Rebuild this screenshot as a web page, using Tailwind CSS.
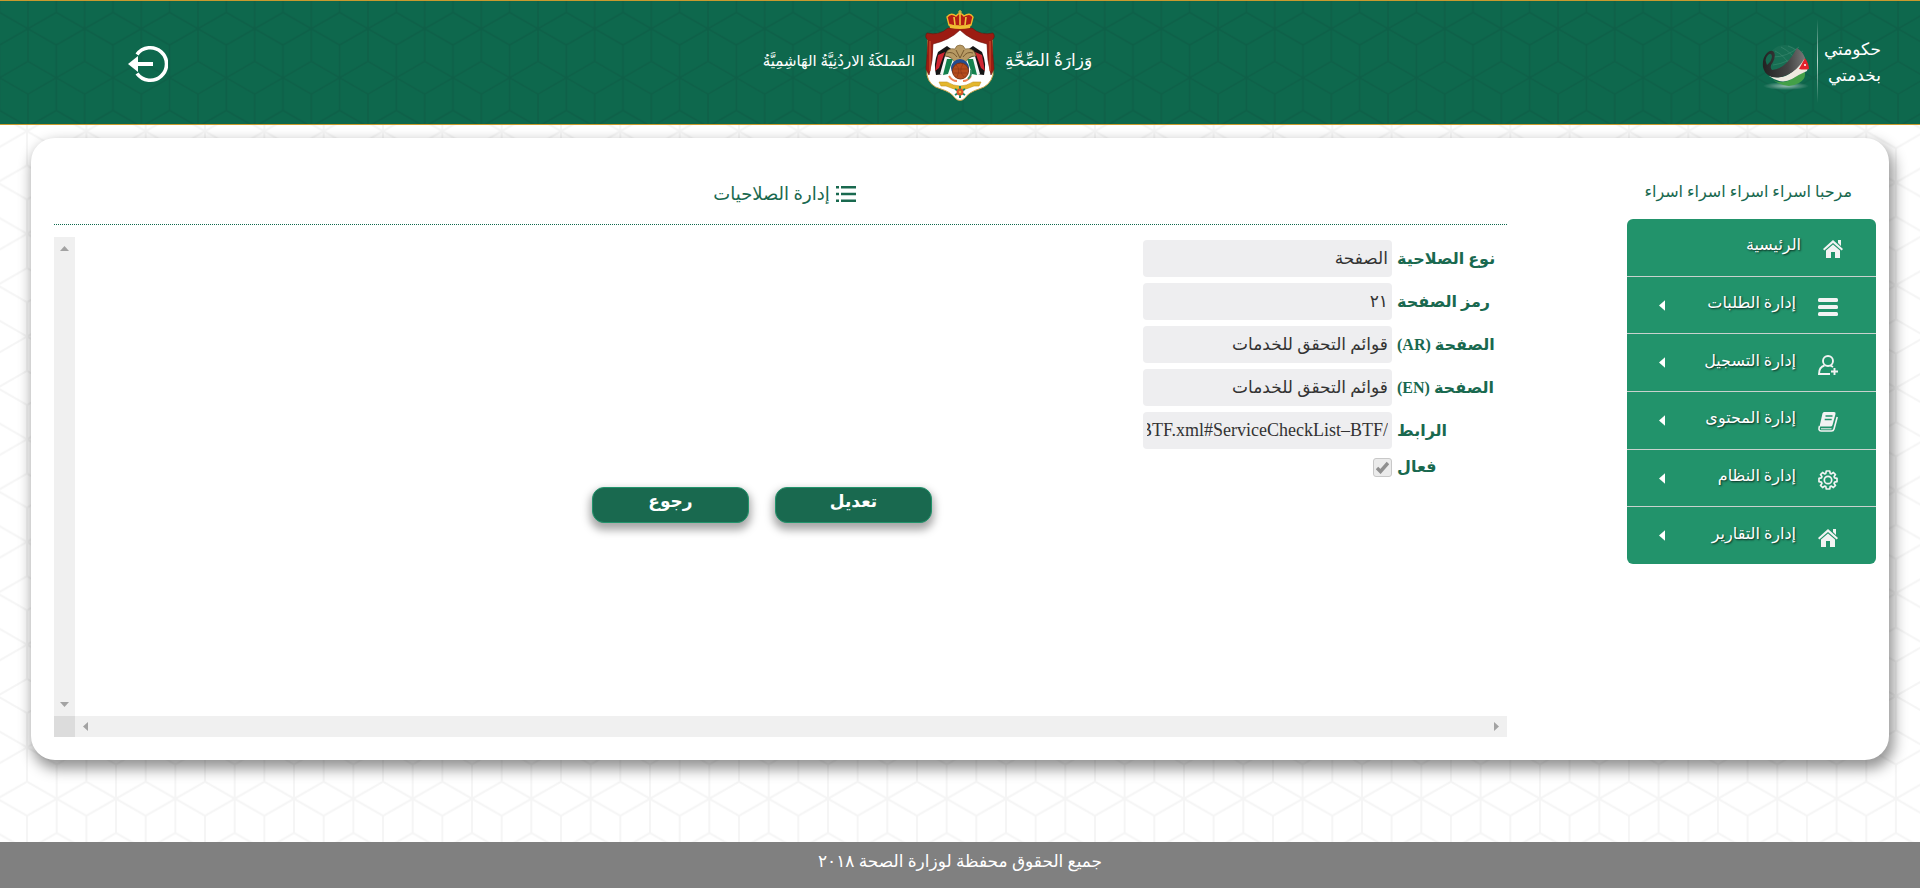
<!DOCTYPE html>
<html lang="ar" dir="rtl">
<head>
<meta charset="utf-8">
<meta name="viewport" content="width=device-width, initial-scale=1">
<title>إدارة الصلاحيات</title>
<script src="https://cdn.jsdelivr.net/npm/@tailwindcss/browser@4"></script>
</head>
<body class="relative isolate flex min-h-screen flex-col bg-white font-['Liberation_Serif','DejaVu_Sans',serif] text-[#19694f]">

<!-- Page background pattern -->
<svg class="absolute inset-0 -z-10 h-full w-full" aria-hidden="true">
  <defs>
    <pattern id="cubes" width="59.33" height="102.7" patternUnits="userSpaceOnUse" patternTransform="translate(56.7 798.7)">
      <path d="M0 0V34.2M59.33 0V34.2M0 68.5V102.7M59.33 68.5V102.7M29.67 17.1V85.6M0 0L29.67 17.1L59.33 0M0 34.2L59.33 68.5M59.33 34.2L0 68.5M0 102.7L29.67 85.6L59.33 102.7" fill="none" stroke="#f5f5f5" stroke-width="2"/>
    </pattern>
    <pattern id="cubes-dark" width="56.67" height="98" patternUnits="userSpaceOnUse" patternTransform="translate(141.3 27.7)">
      <path d="M0 0V32.7M56.67 0V32.7M0 65.3V98M56.67 65.3V98M28.33 16.3V81.7M0 0L28.33 16.3L56.67 0M0 32.7L56.67 65.3M56.67 32.7L0 65.3M0 98L28.33 81.7L56.67 98" fill="none" stroke="#0e6048" stroke-width="1.6"/>
    </pattern>
  </defs>
  <rect width="100%" height="100%" fill="url(#cubes)"/>
</svg>

<header class="relative isolate grid h-[125px] grid-cols-[1fr_auto_1fr] items-start gap-2.5 border-y border-[#c99a2e] bg-[#0e684d] text-white">
  <svg class="absolute inset-0 -z-10 h-full w-full" aria-hidden="true"><rect width="100%" height="100%" fill="url(#cubes-dark)"/></svg>

  <div class="flex items-start justify-between pr-[39px]">
    <div class="flex items-center gap-1.5 pt-[18px]">
      <p class="pt-1 text-[17px] leading-[26px]">حكومتي<br>بخدمتي</p>
      <span class="h-[84px] w-px bg-gradient-to-b from-transparent via-white/70 to-transparent"></span>
      <svg class="mt-3 h-12 w-[50px]" viewBox="0 0 50 48" aria-hidden="true">
        <defs>
          <radialGradient id="glow"><stop offset="0" stop-color="#fff" stop-opacity=".55"/><stop offset="1" stop-color="#fff" stop-opacity="0"/></radialGradient>
          <linearGradient id="band" x1="0" x2="1"><stop offset="0" stop-color="#222"/><stop offset=".6" stop-color="#444"/><stop offset="1" stop-color="#777"/></linearGradient>
        </defs>
        <ellipse cx="25" cy="43" rx="23" ry="4" fill="url(#glow)"/>
        <circle cx="24" cy="20" r="18" fill="#176e53"/>
        <path d="M14 8Q24 12 34 30M20 4Q32 10 40 24M27 3Q36 6 42 14M12 14Q26 14 38 4M12 22Q28 20 42 8M14 30Q32 26 44 14" fill="none" stroke="#3d8a70" stroke-width=".6"/>
        <path d="M12 37Q22 42 31 36Q40 30 44 29Q45 36 38 40Q26 47 12 37Z" fill="#43a047"/>
        <path d="M8 33Q22 37 31 29Q38 23 43 15Q48 22 46 28Q39 31 31 36Q20 42 8 33Z" fill="#eeeae0"/>
        <path d="M38 26L44 15Q48 21 48 26Q43 27 38 26Z" fill="#e3202c"/>
        <circle cx="44" cy="22" r="1" fill="#fff"/>
        <path d="M2 24Q1 15 6 10Q10 6 13 9Q15 13 12 19Q8 24 11 27Q24 27 36 5Q42 9 44 15Q36 28 26 32Q14 37 7 32Q3 29 2 24Z" fill="url(#band)"/>
        <path d="M6 22Q3 16 7 12Q10 9 11 13Q11 18 6 22Z" fill="#14694f"/>
      </svg>
    </div>
    <p class="pt-11 text-[17px] leading-8">وَزارَةُ الصِّحَّةِ</p>
  </div>

  <svg class="mt-2 h-[93px] w-[70px]" viewBox="0 0 70 93" role="img" aria-label="شعار المملكة">
    <path d="M3 27Q22 24 35 20Q48 24 67 27L68 66Q65 77 54 80Q44 83 40 89Q35 94 30 89Q26 83 16 80Q4 77 2 66Z" fill="#fff" stroke="#cfa64a"/>
    <path d="M23 19Q14 27 2 24Q-1 28 3 31Q2 48 1 60L4 66Q8 52 8 35Q25 31 35 21Q45 31 62 35Q62 52 66 66L69 60Q68 48 67 31Q71 28 68 24Q56 27 47 19Z" fill="#9c1c12" stroke="#6d130c" stroke-width=".6"/>
    <path d="M5 32V62M65 32V62" stroke="#dc5a33" stroke-width="1"/>
    <path d="M24 16L22 8Q26 3 31 7Q35 2 39 7Q45 3 48 8L46 16Q35 19 24 16Z" fill="#b51d14" stroke="#f1b72b" stroke-width="1.4"/>
    <path d="M30 16L29 8M35 16V5M40 16L41 8" stroke="#f1c33b" stroke-width="1.6"/>
    <path d="M24 15Q35 18 46 15L45 19Q35 21 25 19Z" fill="#f0bd32"/>
    <path d="M35 1V5M33 3H37" stroke="#f1c33b" stroke-width="1.2"/>
    <path d="M22 37L13 43Q8 55 11 66L20 65Q26 51 29 42Z" fill="#151515"/>
    <path d="M48 37L57 43Q62 55 59 66L50 65Q44 51 41 42Z" fill="#151515"/>
    <path d="M20 47L15 65L19 67L26 49ZM50 47L55 65L51 67L44 49Z" fill="#f7f7f7"/>
    <path d="M22 50L18 66L23 65L28 50ZM48 50L52 66L47 65L42 50Z" fill="#14814d"/>
    <path d="M13 46L10 62L14 59L20 43ZM57 46L60 62L56 59L50 43Z" fill="#cf2430"/>
    <path d="M20 47Q22 38 30 40Q31 36 35 36Q39 36 40 40Q49 38 51 47Q44 46 40 54Q35 57 30 54Q27 47 20 47Z" fill="#b89a64" stroke="#7f6436" stroke-width=".7"/>
    <path d="M22 44Q28 42 32 48M48 44Q42 42 38 48M31 41L35 49L39 41" fill="none" stroke="#76592f"/>
    <circle cx="35" cy="59" r="9" fill="#244c91"/>
    <circle cx="35.500" cy="62" r="8" fill="#b54c1d" stroke="#7d3213"/>
    <path d="M29 60H42M31 56Q36 60 32 68M38 55Q33 62 39 68M29 64H42" fill="none" stroke="#8d3717" stroke-width=".7"/>
    <path d="M24 67Q27 72 32 72M46 67Q43 72 38 72" fill="none" stroke="#ef8254" stroke-width="2"/>
    <path d="M43 70Q47 66 46 61" fill="none" stroke="#348c64" stroke-width="2"/>
    <path d="M14 73H22Q35 81 48 73H56L54 77H49Q35 84 21 77H16Z" fill="#e4b72c" stroke="#c1921e" stroke-width=".6"/>
    <g fill="none" stroke="#168b68" stroke-width="2"><path d="M35 77V89M30 80L40 86M40 80L30 86"/></g>
    <circle cx="35" cy="83" r="3.500" fill="#d5542b"/><circle cx="35" cy="83" r="1.300" fill="#f0b52d"/>
  </svg>

  <div class="flex items-start justify-between pl-32">
    <p class="pt-11 text-[15px] leading-8">المَملكَةُ الاردُنِيَّةُ الهَاشِمِيَّةُ</p>
    <a href="#" aria-label="تسجيل الخروج" class="pt-11">
      <svg class="h-[38px] w-10" viewBox="0 0 40 38" aria-hidden="true">
        <path d="M9 9.500A16.300 16.300 0 1 1 9 28.500" fill="none" stroke="#fff" stroke-width="3.600"/>
        <path d="M0 19L10 11V17H25V21H10V27Z" fill="#fff"/>
      </svg>
    </a>
  </div>
</header>

<div class="mx-[31px] mt-[13px] mb-[82px] flex min-h-[622px] flex-1 rounded-3xl bg-white pr-[13px] pl-[23px] shadow-[3px_7px_14px_2px_rgba(0,0,0,0.42)]">

  <aside class="w-[249px] shrink-0 pt-10">
    <p class="pr-6 text-base leading-7 whitespace-nowrap">مرحبا اسراء اسراء اسراء اسراء</p>
    <nav class="mt-[13px] flex h-[345px] flex-col divide-y divide-[#c9d2ce] overflow-hidden rounded-md bg-[#22936b] text-base text-white [text-shadow:1px_1px_2px_rgba(0,0,0,0.7)]">
      <a href="#" class="flex flex-1 items-center gap-[22px] pr-[33px]">
        <svg class="mt-1 size-5" viewBox="0 0 20 20" fill="#f3f3f3" aria-hidden="true"><path d="M10 1L20 10L18.700 11.500L10 4L1.300 11.500L0 10ZM15 1H18V7L15 4ZM10 5.500L17 11.500V19H12V13H8V19H3V11.500Z"/></svg>
        <span class="mb-1">الرئيسية</span>
      </a>
      <a href="#" class="flex flex-1 items-center gap-[22px] pr-[38px] pl-8">
        <svg class="mt-1 size-5" viewBox="0 0 20 20" fill="#f3f3f3" aria-hidden="true"><rect y="1" width="20" height="4" rx="1.500"/><rect y="8" width="20" height="4" rx="1.500"/><rect y="15" width="20" height="4" rx="1.500"/></svg>
        <span class="mb-1 flex-1">إدارة الطلبات</span>
        <svg class="h-[11px] w-1.5" viewBox="0 0 7 12" fill="#fff" aria-hidden="true"><path d="M7 0V12L0 6Z"/></svg>
      </a>
      <a href="#" class="flex flex-1 items-center gap-[22px] pr-[38px] pl-8">
        <svg class="mt-1 size-5" viewBox="0 0 20 20" fill="none" stroke="#f3f3f3" stroke-width="1.900" aria-hidden="true"><circle cx="10" cy="6" r="5"/><path d="M6.500 10.500Q1 12 1 19H12M16.500 13V20M13 16.500H20M12.500 10.500L15 12"/></svg>
        <span class="mb-1 flex-1">إدارة التسجيل</span>
        <svg class="h-[11px] w-1.5" viewBox="0 0 7 12" fill="#fff" aria-hidden="true"><path d="M7 0V12L0 6Z"/></svg>
      </a>
      <a href="#" class="flex flex-1 items-center gap-[22px] pr-[38px] pl-8">
        <svg class="mt-1 size-5" viewBox="0 0 20 20" aria-hidden="true"><path d="M6 0H16Q18 0 17.500 2L14.500 13Q14 14.500 12.500 14.500H1.500L4.500 1.500Q5 0 6 0Z" fill="#f3f3f3"/><path d="M1.500 14Q0 19 3 19H13.500Q15.500 19 16 17L19.200 5" fill="none" stroke="#f3f3f3" stroke-width="1.600"/><path d="M3 16.800H13.500" stroke="#f3f3f3" stroke-width="1"/><path d="M7.500 4H14.500M6.700 7.500H13.700" stroke="#22936b" stroke-width="1.400"/></svg>
        <span class="mb-1 flex-1">إدارة المحتوى</span>
        <svg class="h-[11px] w-1.5" viewBox="0 0 7 12" fill="#fff" aria-hidden="true"><path d="M7 0V12L0 6Z"/></svg>
      </a>
      <a href="#" class="flex flex-1 items-center gap-[22px] pr-[38px] pl-8">
        <svg class="mt-1 size-5" viewBox="0 0 20 20" fill="none" stroke="#f3f3f3" stroke-width="1.700" stroke-linejoin="round" aria-hidden="true"><path d="M8.300 1H11.700L12.200 3.400L13.400 3.900L15.400 2.500L17.500 4.600L16.100 6.600L16.600 7.800L19 8.300V11.700L16.600 12.200L16.100 13.400L17.500 15.400L15.400 17.500L13.400 16.100L12.200 16.600L11.700 19H8.300L7.800 16.600L6.600 16.100L4.600 17.500L2.500 15.400L3.900 13.400L3.400 12.200L1 11.700V8.300L3.400 7.800L3.900 6.600L2.500 4.600L4.600 2.500L6.600 3.900L7.800 3.400Z"/><circle cx="10" cy="10" r="3.700"/></svg>
        <span class="mb-1 flex-1">إدارة النظام</span>
        <svg class="h-[11px] w-1.5" viewBox="0 0 7 12" fill="#fff" aria-hidden="true"><path d="M7 0V12L0 6Z"/></svg>
      </a>
      <a href="#" class="flex flex-1 items-center gap-[22px] pr-[38px] pl-8">
        <svg class="mt-1 size-5" viewBox="0 0 20 20" fill="#f3f3f3" aria-hidden="true"><path d="M10 1L20 10L18.700 11.500L10 4L1.300 11.500L0 10ZM15 1H18V7L15 4ZM10 5.500L17 11.500V19H12V13H8V19H3V11.500Z"/></svg>
        <span class="mb-1 flex-1">إدارة التقارير</span>
        <svg class="h-[11px] w-1.5" viewBox="0 0 7 12" fill="#fff" aria-hidden="true"><path d="M7 0V12L0 6Z"/></svg>
      </a>
    </nav>
  </aside>

  <main class="mr-[120px] flex min-w-0 flex-1 flex-col pt-10 pb-[23px]">
    <h1 class="flex h-[47px] items-start justify-center gap-1.5 border-b border-dotted border-[#0e684d] pl-2 text-lg leading-8 font-normal">
      <svg class="mt-2 h-4 w-5" viewBox="0 0 20 16" fill="#19694f" aria-hidden="true"><path d="M0 0H15V2.500H0ZM0 6.700H15V9.200H0ZM0 13.400H15V16H0ZM17 0H20V2.500H17ZM17 6.700H20V9.200H17ZM17 13.400H20V16H17Z" transform="matrix(-1 0 0 1 20 0)"/></svg>
      إدارة الصلاحيات
    </h1>

    <div class="mt-3 flex flex-1">
      <form class="flex-1 pt-[3px]">
        <div class="grid grid-cols-[110px_249px] items-center gap-x-[5px] gap-y-1.5 text-base font-bold">
          <label for="kind" class="text-left whitespace-nowrap">نوع الصلاحية</label>
          <input id="kind" disabled value="الصفحة" class="h-[37px] rounded bg-[#eeeef0] px-1 text-[17px] font-normal text-[#333]">
          <label for="code" class="text-left whitespace-nowrap">رمز الصفحة</label>
          <input id="code" disabled value="٢١" class="h-[37px] rounded bg-[#eeeef0] px-1 text-[17px] font-normal text-[#333]">
          <label for="page-ar" class="text-left whitespace-nowrap">الصفحة (AR)</label>
          <input id="page-ar" disabled value="قوائم التحقق للخدمات" class="h-[37px] rounded bg-[#eeeef0] px-1 text-[17px] font-normal text-[#333]">
          <label for="page-en" class="text-left whitespace-nowrap">الصفحة (EN)</label>
          <input id="page-en" disabled value="قوائم التحقق للخدمات" class="h-[37px] rounded bg-[#eeeef0] px-1 text-[17px] font-normal text-[#333]">
          <label for="link" class="text-left whitespace-nowrap">الرابط</label>
          <input id="link" disabled value="/BTF.xml#ServiceCheckList–BTF" class="h-[37px] rounded bg-[#eeeef0] px-1 text-lg font-normal text-[#333]">
          <label for="active" class="text-left whitespace-nowrap">فعال</label>
          <span class="relative flex h-6 items-center">
            <input id="active" type="checkbox" checked disabled class="size-[19px] appearance-none rounded-[3px] border border-[#c8c8c8] bg-[#ebebeb]">
            <svg class="pointer-events-none absolute right-[3px] size-[13px]" viewBox="0 0 13 13" fill="none" stroke="#8f8f8f" stroke-width="3.500" aria-hidden="true"><path d="M1 7L4.500 10.500L12 2"/></svg>
          </span>
        </div>
        <div class="mt-2 flex justify-center gap-[26px] pr-[58px] text-[17px] font-bold text-white">
          <button type="button" class="h-9 w-[157px] rounded-xl border border-[#22936b] bg-[#19694f] pb-1.5 leading-6 shadow-[0_5px_9px_2px_rgba(0,0,0,0.35)]">تعديل</button>
          <button type="button" class="h-9 w-[157px] rounded-xl border border-[#22936b] bg-[#19694f] pb-1.5 leading-6 shadow-[0_5px_9px_2px_rgba(0,0,0,0.35)]">رجوع</button>
        </div>
      </form>
      <div class="flex w-[21px] flex-col items-center justify-between bg-[#f0f0f0] py-[9px]" aria-hidden="true">
        <svg class="h-[5px] w-[9px]" viewBox="0 0 9 5" fill="#a3a3a3"><path d="M4.500 0L9 5H0Z"/></svg>
        <svg class="h-[5px] w-[9px]" viewBox="0 0 9 5" fill="#a3a3a3"><path d="M0 0H9L4.500 5Z"/></svg>
      </div>
    </div>
    <div class="flex h-[21px]" aria-hidden="true">
      <div class="flex flex-1 items-center justify-between bg-[#f0f0f0] px-2">
        <svg class="h-[9px] w-[5px]" viewBox="0 0 5 9" fill="#a3a3a3"><path d="M0 0L5 4.500L0 9Z"/></svg>
        <svg class="h-[9px] w-[5px]" viewBox="0 0 5 9" fill="#a3a3a3"><path d="M5 0V9L0 4.500Z"/></svg>
      </div>
      <div class="w-[21px] bg-[#dcdcdc]"></div>
    </div>
  </main>
</div>

<footer class="h-[46px] bg-[#808080] pt-1.5 text-center text-[17px] leading-7 text-white">جميع الحقوق محفظة لوزارة الصحة ٢٠١٨</footer>
</body>
</html>
